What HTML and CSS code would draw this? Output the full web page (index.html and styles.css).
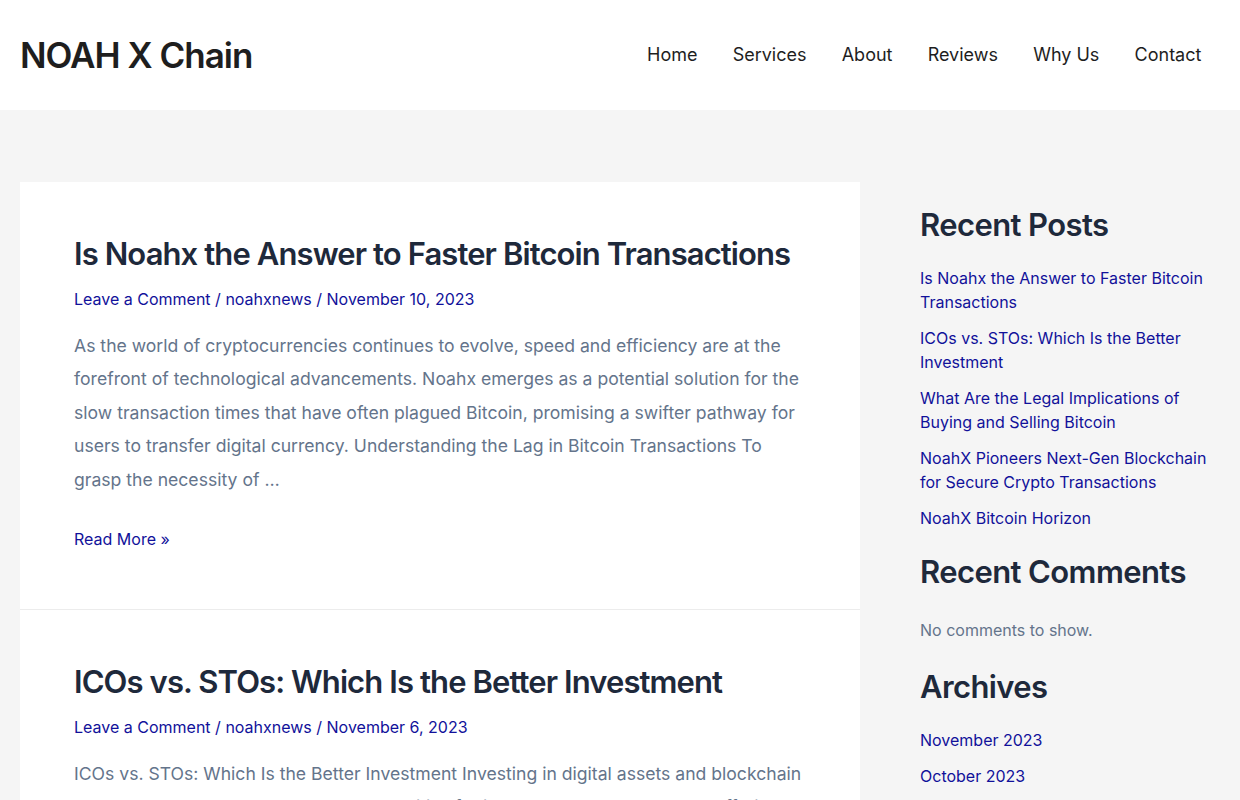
FILE: index.html
```html
<!DOCTYPE html>
<html lang="en">
<head>
<meta charset="utf-8">
<title>NOAH X Chain</title>
<link rel="stylesheet" href="styles.css">
</head>
<body>
<header class="site-header">
  <a class="logo" href="#">NOAH X Chain</a>
  <nav class="main-nav">
    <a href="#">Home</a>
    <a href="#">Services</a>
    <a href="#">About</a>
    <a href="#">Reviews</a>
    <a href="#">Why Us</a>
    <a href="#">Contact</a>
  </nav>
</header>
<div class="site-content">
  <main class="posts">
    <article class="post">
      <h2 class="post-title">Is Noahx the Answer to Faster Bitcoin Transactions</h2>
      <div class="post-meta"><a href="#">Leave a Comment</a> / <a href="#">noahxnews</a> / <a href="#">November 10, 2023</a></div>
      <p class="excerpt">As the world of cryptocurrencies continues to evolve, speed and efficiency are at the forefront of technological advancements. Noahx emerges as a potential solution for the slow transaction times that have often plagued Bitcoin, promising a swifter pathway for users to transfer digital currency. Understanding the Lag in Bitcoin Transactions To grasp the necessity of …</p>
      <a class="read-more" href="#">Read More »</a>
    </article>
    <article class="post">
      <h2 class="post-title">ICOs vs. STOs: Which Is the Better Investment</h2>
      <div class="post-meta"><a href="#">Leave a Comment</a> / <a href="#">noahxnews</a> / <a href="#">November 6, 2023</a></div>
      <p class="excerpt">ICOs vs. STOs: Which Is the Better Investment Investing in digital assets and blockchain technology has opened up new opportunities for investors around the world, offering a range of options to choose from.</p>
      <a class="read-more" href="#">Read More »</a>
    </article>
  </main>
  <aside class="sidebar">
    <section class="widget">
      <h2 class="widget-title">Recent Posts</h2>
      <ul class="widget-list">
        <li><a href="#">Is Noahx the Answer to Faster Bitcoin Transactions</a></li>
        <li><a href="#">ICOs vs. STOs: Which Is the Better Investment</a></li>
        <li><a href="#">What Are the Legal Implications of Buying and Selling Bitcoin</a></li>
        <li><a href="#">NoahX Pioneers Next-Gen Blockchain for Secure Crypto Transactions</a></li>
        <li><a href="#">NoahX Bitcoin Horizon</a></li>
      </ul>
    </section>
    <section class="widget">
      <h2 class="widget-title">Recent Comments</h2>
      <p class="widget-text">No comments to show.</p>
    </section>
    <section class="widget">
      <h2 class="widget-title">Archives</h2>
      <ul class="widget-list">
        <li><a href="#">November 2023</a></li>
        <li><a href="#">October 2023</a></li>
      </ul>
    </section>
  </aside>
</div>
</body>
</html>
```

FILE: styles.css
```css
* { box-sizing: border-box; }
html, body { margin: 0; padding: 0; }
body {
  background: #f5f5f5;
  font-family: Inter, "Noto Sans", sans-serif;
  color: #64748b;
  font-size: 16px;
}
a { text-decoration: none; color: #11119a; }

.site-header {
  background: #fff;
  height: 110px;
  display: flex;
  align-items: center;
  justify-content: space-between;
  padding: 0 20px;
}
.logo {
  font-family: Inter, sans-serif;
  font-size: 35px;
  font-weight: 600;
  letter-spacing: -1px;
  color: #1e1e1e;
}
.main-nav { display: flex; margin-right: 1px; }
.main-nav a {
  color: #1e1e1e;
  font-size: 18px;
  padding: 0 17.6px;
  line-height: 110px;
}

.site-content {
  display: flex;
  padding: 72px 20px 0;
  gap: 60px;
}
.posts { width: 840px; flex: none; }
.post {
  background: #fff;
  padding: 54px 54px 58px;
  border-bottom: 1px solid #ececec;
}
.post-title {
  font-family: Inter, sans-serif;
  font-weight: 600;
  font-size: 31px;
  letter-spacing: -0.9px;
  line-height: 36px;
  color: #1e293b;
  margin: 0 0 15px;
  white-space: nowrap;
}
.post-meta {
  font-size: 16px;
  line-height: 24px;
  color: #11119a;
}
.excerpt {
  margin: 18px 0 31px;
  font-size: 17.6px;
  line-height: 33.4px;
}
.read-more {
  display: block;
  font-size: 16px;
  line-height: 24px;
}

.sidebar { width: 300px; flex: none; padding-top: 24px; }
.widget { margin-bottom: 23px; }
.widget-title {
  font-family: Inter, sans-serif;
  font-weight: 600;
  font-size: 31px;
  letter-spacing: -0.6px;
  line-height: 38px;
  color: #1e293b;
  margin: 0 0 22px;
}
.widget-list { list-style: none; margin: 0; padding: 0; }
.widget-list li { margin-bottom: 12px; font-size: 16px; line-height: 24px; }
.widget-text { margin: 27px 0 26px; font-size: 16px; line-height: 24px; }
```
